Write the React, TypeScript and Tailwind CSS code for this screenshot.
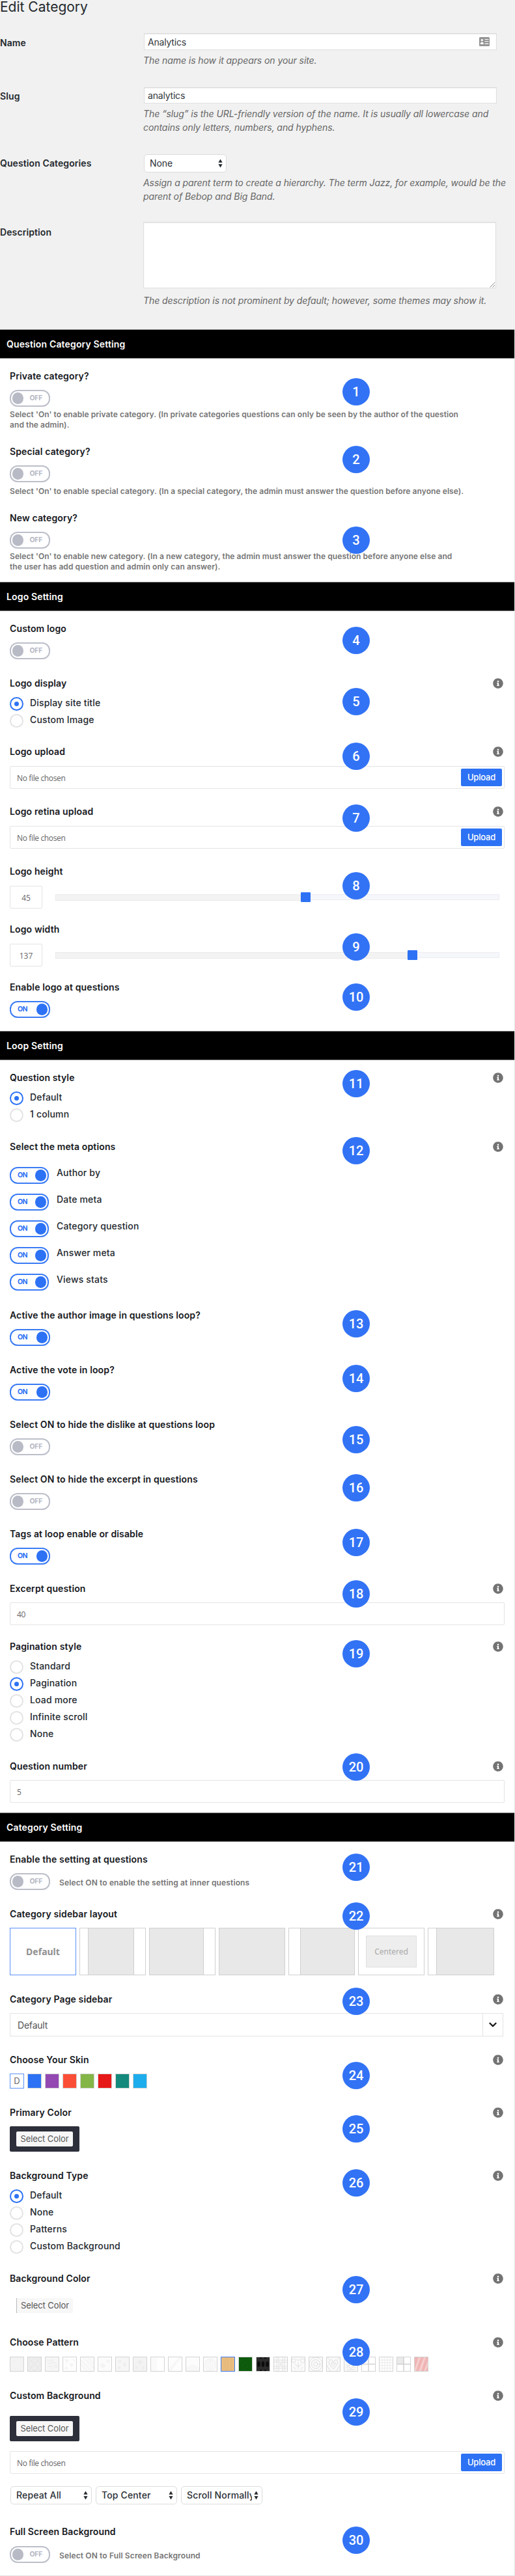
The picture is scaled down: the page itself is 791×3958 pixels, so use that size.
import type { ReactNode } from "react";
import clsx from "clsx";
import { ChevronDown } from "lucide-react";
import { FaInfoCircle } from "react-icons/fa";

function Toggle({ on, narrow }: { on?: boolean; narrow?: boolean }) {
  return (
    <div
      className={clsx(
        "flex h-[26px] shrink-0 items-center justify-between rounded-[12px] border-2 text-[10.5px] leading-none font-bold",
        narrow ? "w-[60px]" : "w-[62px]",
        on
          ? "border-[#3a7bf5] pr-[2px] pl-[10px] text-[#2d72f4]"
          : "border-[#bcbfca] pr-[10px] pl-[2px] text-[#b5b7c3]",
      )}
    >
      {on && <span className="pt-px tracking-[-0.7px]">ON</span>}
      <span
        className={clsx(
          "h-[18px] w-[17px] rounded-full",
          on ? "bg-[#2d72f4]" : "bg-[#b8bac5]",
        )}
      />
      {!on && <span className="pt-px tracking-[-0.3px]">OFF</span>}
    </div>
  );
}

function Radios({ items, active }: { items: string[]; active: string }) {
  return (
    <div className="mt-[11px]">
      {items.map((item) => (
        <div key={item} className="flex h-[26px] items-start">
          <span
            className={clsx(
              "flex h-[21px] w-[21px] items-center justify-center rounded-full border-2",
              item === active ? "border-[#2d72f4]" : "border-[#e3e3e3]",
            )}
          >
            {item === active && (
              <span className="h-[7px] w-[7px] rounded-full bg-[#2d72f4]" />
            )}
          </span>
          <span className="ml-[10px] text-[14px] leading-[18px] font-medium tracking-[0.17px] text-[#23282d]">
            {item}
          </span>
        </div>
      ))}
    </div>
  );
}

function Field({
  label,
  n,
  badge,
  info,
  className,
  children,
}: {
  label: string;
  n: number;
  badge: string;
  info?: boolean;
  className: string;
  children: ReactNode;
}) {
  return (
    <div className={clsx("relative px-[15px] pt-[17px]", className)}>
      <div className="flex h-5 items-center justify-between pr-[2px]">
        <h3 className="text-[14px] leading-5 font-semibold tracking-[0.13px] text-[#16181d]">
          {label}
        </h3>
        {info && <FaInfoCircle className="h-4 w-4 text-[#737373]" />}
      </div>
      {children}
      <span
        className={clsx(
          "absolute left-[526px] z-10 flex h-[42px] w-[42px] items-center justify-center rounded-full bg-[#3273f5] font-['Roboto',sans-serif] text-[20px] font-medium text-white",
          badge,
        )}
      >
        {n}
      </span>
    </div>
  );
}

function SectionTitle({ children }: { children: ReactNode }) {
  return (
    <h2 className="flex h-[45px] items-center border-y border-[#777] bg-black px-[10px] text-[14px] font-semibold tracking-[0.15px] text-white">
      {children}
    </h2>
  );
}

function Note({ children, className }: { children: ReactNode; className?: string }) {
  return (
    <p
      className={clsx(
        "text-[12px] leading-4 font-semibold whitespace-nowrap text-[#757575]",
        className,
      )}
    >
      {children}
    </p>
  );
}

function Upload({ className }: { className: string }) {
  return (
    <div
      className={clsx(
        "flex h-[35px] w-[760px] items-center justify-between rounded-[2px] border border-[#e4e4e4] pr-[3px] pl-[10px]",
        className,
      )}
    >
      <span className="pt-[2px] font-['Open_Sans',sans-serif] text-[12px] tracking-[-0.36px] text-[#666]">
        No file chosen
      </span>
      <span className="flex h-[27px] w-[63px] items-center justify-center rounded-[2px] bg-[#2d72f4] text-[13px] font-medium tracking-[-0.2px] text-white">
        Upload
      </span>
    </div>
  );
}

function NumberBox({ value }: { value: string }) {
  return (
    <div className="mt-[11px] flex h-[35px] w-[760px] items-center rounded-[2px] border border-[#e4e4e4] pt-[2px] pl-[10px] font-['Open_Sans',sans-serif] text-[12px] tracking-[-0.3px] text-[#666]">
      {value}
    </div>
  );
}

function Slider({ value, percent }: { value: string; percent: number }) {
  return (
    <div className="mt-[12px] flex items-center">
      <div className="flex h-[35px] w-[50px] items-center justify-center rounded-[2px] border border-[#e4e4e4] pt-[2px] font-['Open_Sans',sans-serif] text-[12px] text-[#666]">
        {value}
      </div>
      <div className="relative ml-5 h-[9px] w-[682px] border border-[#ececf2] bg-[#f6f7fb]">
        <div
          className="absolute -top-px -left-px h-[10px] border border-[#e9e9e9] bg-[#f3f3f3]"
          style={{ width: `${percent}%` }}
        />
        <div
          className="absolute -top-[4px] -ml-px h-[15px] w-[15px] rounded-[1px] bg-[#2d72f4]"
          style={{ left: `${percent}%` }}
        />
      </div>
    </div>
  );
}

function Select({ label, className }: { label: string; className: string }) {
  return (
    <div
      className={clsx(
        "flex h-[28px] items-center justify-between rounded-[5px] border border-[#dcdcdc] bg-white pr-[5px] pl-2 text-[14px] text-[#2b3036]",
        className,
      )}
    >
      <span className="w-[100px] overflow-hidden leading-5 whitespace-nowrap">{label}</span>
      <svg viewBox="0 0 7 14" className="h-[14px] w-[7px] shrink-0" fill="#23282d">
        <path d="M3.5 0.5 6.6 5.8H0.4zM3.5 13.5 6.6 8.2H0.4z" />
      </svg>
    </div>
  );
}

function FormRow({
  label,
  labelClass,
  className,
  children,
}: {
  label: string;
  labelClass: string;
  className?: string;
  children: ReactNode;
}) {
  return (
    <div className={clsx("flex", className)}>
      <div
        className={clsx(
          "w-[220px] shrink-0 text-[14px] leading-5 font-semibold tracking-[0.1px] text-[#23282d]",
          labelClass,
        )}
      >
        {label}
      </div>
      <div>{children}</div>
    </div>
  );
}

function Help({ className, children }: { className?: string; children: ReactNode }) {
  return (
    <p
      className={clsx(
        "text-[14px] leading-[21px] tracking-[-0.07px] whitespace-nowrap text-[#666] italic",
        className,
      )}
    >
      {children}
    </p>
  );
}

function ColorButton({ className, light }: { className: string; light?: boolean }) {
  return (
    <div
      className={clsx(
        "flex h-[39px] w-[107px] items-center justify-center rounded-[2px]",
        !light && "bg-[#2d303a]",
        className,
      )}
    >
      <span
        className={clsx(
          "flex h-[23px] w-[87px] items-center justify-center rounded-[2px] bg-[#f7f7f7] text-[13px] tracking-[-0.1px] text-[#555]",
          light && "rounded-l-none border-l border-[#bbb]",
        )}
      >
        Select Color
      </span>
    </div>
  );
}

const skins = [
  "bg-[#2d72f4]",
  "bg-[#9349b1]",
  "bg-[#fa4f36]",
  "bg-[#84b547]",
  "bg-[#e71818]",
  "bg-[#15897b]",
  "bg-[#1dacec]",
];

// 20x20 previews of the background textures
const patterns: { fill: string; art?: ReactNode }[] = [
  { fill: "#f3f3f3", art: <path d="M3 5h5M12 12h5M5 16h4" stroke="#efefef" /> },
  {
    fill: "#eeeeee",
    art: (
      <g fill="#fafafa" stroke="#e4e4e4" strokeWidth="0.8">
        <path d="M0 10 10 0 20 10 10 20zM0 0l20 20M20 0 0 20" fill="none" />
        <circle cx="5" cy="10" r="1.5" />
        <circle cx="15" cy="10" r="1.5" />
        <circle cx="10" cy="4" r="1.5" />
        <circle cx="10" cy="16" r="1.5" />
      </g>
    ),
  },
  { fill: "#f6f6f6", art: <path d="M2 4h6v5H3M11 2v6h6M4 13h5v5M12 12h5v3h-4" fill="none" stroke="#eaeaea" /> },
  { fill: "#fdfdfd", art: <path d="M2 2l6 2-2 5zM10 8l6 2-3 5zM4 13l4 4H2zM13 1l5 3v3z" fill="#f3f3f3" /> },
  { fill: "#fafafa", art: <path d="M0 4 16 20M0 10l10 10M4 0l16 16M10 0l10 10" stroke="#f1f1f1" /> },
  { fill: "#fbfbfb", art: <path d="M2 12l5-4 5 5-5 3zM11 5l6-2v6z" fill="#f3f3f3" /> },
  { fill: "#f6f6f6", art: <path d="M4 4h4v4H4zM11 8h5v5h-5zM3 13h4v4H3z" fill="#eeeeee" /> },
  { fill: "#f3f3f3", art: <path d="M10 3l4 4-4 4-4-4zM3 11l4 4-4 3zM13 12l5 3-4 4z" fill="#ececec" /> },
  { fill: "#fefefe", art: <path d="M0 0h9v20H0z" fill="#fafafa" /> },
  { fill: "#fdfdfd", art: <path d="M0 16 16 0h4L4 20H0z" fill="#f7f7f7" /> },
  { fill: "#fcfcfc", art: <path d="M0 20v-4q10-10 20 0v4z" fill="#f7f7f7" /> },
  {
    fill: "#fbfbfb",
    art: (
      <g fill="none" stroke="#efefef">
        <ellipse cx="10" cy="11" rx="4" ry="7" />
        <ellipse cx="10" cy="11" rx="8" ry="9" />
        <path d="M10 4v14" />
      </g>
    ),
  },
  { fill: "#e9bd80", art: <path d="M6 0v20M9 0q2 10 0 20M15 0v20" fill="none" stroke="#e3b475" strokeWidth="0.7" /> },
  { fill: "#0d5a0d", art: <path d="M3 4h2M9 7h2M14 3h2M5 12h2M12 14h2M16 10h2M7 17h2" stroke="#11620f" strokeWidth="2" /> },
  {
    fill: "#2b2b2b",
    art: (
      <g fill="#0c0c0c">
        <ellipse cx="3.5" cy="10" rx="2.2" ry="4" />
        <ellipse cx="10" cy="10" rx="2.2" ry="4" />
        <ellipse cx="16.5" cy="10" rx="2.2" ry="4" />
        <path d="M5 0h3v2H5zM12 0h3v2h-3zM5 18h3v2H5zM12 18h3v2h-3z" />
      </g>
    ),
  },
  {
    fill: "#fbfbfb",
    art: (
      <path
        d="M0 4h20M0 7h20M0 13h20M0 16h20M4 0v20M7 0v20M13 0v20M16 0v20M8 10h4M10 8v4"
        stroke="#e0e0e0"
        fill="none"
        strokeWidth="0.9"
      />
    ),
  },
  {
    fill: "#fafafa",
    art: (
      <g fill="none" stroke="#dcdcdc" strokeWidth="0.8">
        <circle cx="3" cy="5" r="3" />
        <circle cx="17" cy="5" r="3" />
        <path d="M7 2l3 3 3-3M5 10q5 6 10 0M3 14l3 4M17 14l-3 4M10 8v9" />
      </g>
    ),
  },
  {
    fill: "#fafafa",
    art: (
      <g fill="none" stroke="#bdbdbd" strokeWidth="0.8" strokeDasharray="1.6 1.2">
        <circle cx="10" cy="10" r="3" />
        <circle cx="10" cy="10" r="6.5" />
        <circle cx="10" cy="10" r="10" />
      </g>
    ),
  },
  {
    fill: "#f9f9f9",
    art: (
      <g fill="none" stroke="#d6d6d6" strokeWidth="0.8">
        <path d="M10 17Q1 9 4 5t6 2q3-5 6-2t-6 12z" />
        <path d="M10 13q-4-4-3-5t3 1q2-2 3-1t-3 5zM0 12l5 8M20 12l-5 8M1 1l3 2M19 1l-3 2" />
      </g>
    ),
  },
  {
    fill: "#f9f9f9",
    art: (
      <g fill="none" stroke="#d8d8d8" strokeWidth="0.8">
        <circle cx="10" cy="13" r="3" />
        <path d="M2 10l4 3-4 3M18 10l-4 3 4 3M4 18h12M7 8l3 2 3-2" />
      </g>
    ),
  },
  { fill: "#ffffff", art: <path d="M0 10h20M10 0v20" stroke="#d2d2d2" strokeWidth="1.4" /> },
  {
    fill: "#ffffff",
    art: <path d="M0 4h20M0 8h20M0 12h20M0 16h20M4 0v20M8 0v20M12 0v20M16 0v20" stroke="#e6e6e6" strokeWidth="0.8" />,
  },
  {
    fill: "#ffffff",
    art: (
      <g>
        <path d="M0 0h10v10H0z" fill="#eaeaea" />
        <path d="M0 10h20M10 0v20" stroke="#cecece" strokeWidth="1.4" />
      </g>
    ),
  },
  { fill: "#f0b4b4", art: <path d="M0 17 6 0h3L2 20H0zM6 20 14 0h3L10 20zM14 20l6-15v8l-3 7z" fill="#f5cfcf" /> },
];

function Tile({ children, active }: { children?: ReactNode; active?: boolean }) {
  return (
    <div
      className={clsx(
        "flex h-[73px] w-[102px] border",
        active ? "border-[#5a91f7]" : "border-[#d0d0d0]",
      )}
    >
      {children}
    </div>
  );
}

export default function App() {
  return (
    <div className="h-[3958px] w-[791px] overflow-hidden bg-[#f1f1f1] font-['Inter',sans-serif]">
      <div className="h-[506px]">
        <h1 className="h-[51px] text-[21px] leading-[22px] text-[#23282d]">Edit Category</h1>

        <FormRow label="Name" labelClass="pt-[5px]" className="h-[83px]">
          <div className="ml-px flex h-[26px] w-[542px] items-center justify-between border border-[#dfdfdf] border-t-[#d8d8d8] bg-white pr-[10px] pl-[5px] text-[14px] tracking-[-0.2px] text-[#32373c] shadow-[inset_0_1px_2px_rgba(0,0,0,0.07)]">
            Analytics
            <svg viewBox="0 0 16 14" className="h-[14px] w-4">
              <rect width="16" height="14" rx="1.5" fill="#949494" />
              <circle cx="4.3" cy="4.6" r="1.7" fill="#fff" />
              <path d="M1.8 11q0-3.6 2.5-3.6T6.8 11z" fill="#fff" />
              <path d="M8.5 3.5h6M8.5 6.5h6M8.5 10.2h6" stroke="#fff" strokeWidth="1.2" />
            </svg>
          </div>
          <Help className="mt-[5px]">The name is how it appears on your site.</Help>
        </FormRow>

        <FormRow label="Slug" labelClass="pt-[4px]" className="h-[103px]">
          <div className="ml-px flex h-[25px] w-[542px] items-center border border-[#dfdfdf] border-t-[#d8d8d8] bg-white pl-[5px] text-[14px] tracking-[-0.2px] text-[#32373c] shadow-[inset_0_1px_2px_rgba(0,0,0,0.07)]">
            analytics
          </div>
          <Help className="mt-[5px]">
            The “slug” is the URL-friendly version of the name. It is usually all lowercase and
            <br />
            contains only letters, numbers, and hyphens.
          </Help>
        </FormRow>

        <FormRow label="Question Categories" labelClass="pt-[4px]" className="h-[104px]">
          <Select label="None" className="ml-px w-[127px] tracking-[-0.1px]" />
          <Help className="mt-[5px]">
            Assign a parent term to create a hierarchy. The term Jazz, for example, would be the
            <br />
            parent of Bebop and Big Band.
          </Help>
        </FormRow>

        <FormRow label="Description" labelClass="pt-[6px]">
          <div className="flex h-[102px] w-[542px] items-end justify-end border border-[#dfdfdf] border-t-[#d8d8d8] bg-white shadow-[inset_0_1px_2px_rgba(0,0,0,0.07)]">
            <svg viewBox="0 0 9 9" className="h-[9px] w-[9px]" stroke="#777" strokeWidth="0.9">
              <path d="M0.5 8.5 8 1M4.5 8.5 8 5" />
            </svg>
          </div>
          <Help className="mt-[8px]">
            The description is not prominent by default; however, some themes may show it.
          </Help>
        </FormRow>
      </div>

      <div className="h-[3452px] border-r border-b border-[#e5e5e5] bg-white">
        <SectionTitle>Question Category Setting</SectionTitle>
        <Field label="Private category?" n={1} badge="top-[30px]" className="h-[116px]">
          <div className="mt-[11px]">
            <Toggle />
          </div>
          <Note className="mt-[4px] tracking-[0.075px]">
            Select 'On' to enable private category. (In private categories questions can only be seen by the author of the question
            <br />
            and the admin).
          </Note>
        </Field>
        <Field label="Special category?" n={2} badge="top-[18px]" className="h-[102px]">
          <div className="mt-[11px]">
            <Toggle />
          </div>
          <Note className="mt-[6px] tracking-[0.075px]">
            Select 'On' to enable special category. (In a special category, the admin must answer the question before anyone else).
          </Note>
        </Field>
        <Field label="New category?" n={3} badge="top-[40px]" className="h-[125px]">
          <div className="mt-[11px]">
            <Toggle />
          </div>
          <Note className="mt-[4px] tracking-[0.075px]">
            Select 'On' to enable new category. (In a new category, the admin must answer the question before anyone else and
            <br />
            the user has add question and admin only can answer).
          </Note>
        </Field>

        <SectionTitle>Logo Setting</SectionTitle>
        <Field label="Custom logo" n={4} badge="top-[24px]" className="h-[84px]">
          <div className="mt-[11px]">
            <Toggle />
          </div>
        </Field>
        <Field label="Logo display" n={5} badge="top-[34px]" info className="h-[105px]">
          <Radios items={["Display site title", "Custom Image"]} active="Display site title" />
        </Field>
        <Field label="Logo upload" n={6} badge="top-[13px]" info className="h-[92px]">
          <Upload className="mt-[12px]" />
        </Field>
        <Field label="Logo retina upload" n={7} badge="top-[16px]" info className="h-[92px]">
          <Upload className="mt-[12px]" />
        </Field>
        <Field label="Logo height" n={8} badge="top-[28px]" className="h-[89px]">
          <Slider value="45" percent={55.4} />
        </Field>
        <Field label="Logo width" n={9} badge="top-[33px]" className="h-[89px]">
          <Slider value="137" percent={79.6} />
        </Field>
        <Field label="Enable logo at questions" n={10} badge="top-[21px]" className="h-[94px]">
          <div className="mt-[11px]">
            <Toggle on />
          </div>
        </Field>

        <SectionTitle>Loop Setting</SectionTitle>
        <Field label="Question style" n={11} badge="top-[15px]" info className="h-[106px]">
          <Radios items={["Default", "1 column"]} active="Default" />
        </Field>
        <Field label="Select the meta options" n={12} badge="top-[12px]" info className="h-[259px]">
          <div className="mt-[21px]">
            {["Author by", "Date meta", "Category question", "Answer meta", "Views stats"].map(
              (meta) => (
                <div key={meta} className="flex h-[41px] items-start gap-3">
                  <Toggle on narrow />
                  <span className="text-[14px] leading-[18px] font-medium tracking-[0.17px] text-[#23282d]">
                    {meta}
                  </span>
                </div>
              ),
            )}
          </div>
        </Field>
        <Field label="Active the author image in questions loop?" n={13} badge="top-[19px]" className="h-[84px]">
          <div className="mt-[11px]">
            <Toggle on />
          </div>
        </Field>
        <Field label="Active the vote in loop?" n={14} badge="top-[19px]" className="h-[84px]">
          <div className="mt-[11px]">
            <Toggle on />
          </div>
        </Field>
        <Field label="Select ON to hide the dislike at questions loop" n={15} badge="top-[29px]" className="h-[84px]">
          <div className="mt-[11px]">
            <Toggle />
          </div>
        </Field>
        <Field label="Select ON to hide the excerpt in questions" n={16} badge="top-[19px]" className="h-[84px]">
          <div className="mt-[11px]">
            <Toggle />
          </div>
        </Field>
        <Field label="Tags at loop enable or disable" n={17} badge="top-[19px]" className="h-[84px]">
          <div className="mt-[11px]">
            <Toggle on />
          </div>
        </Field>
        <Field label="Excerpt question" n={18} badge="top-[14px]" info className="h-[89px]">
          <NumberBox value="40" />
        </Field>
        <Field label="Pagination style" n={19} badge="top-[17px]" info className="h-[184px]">
          <Radios
            items={["Standard", "Pagination", "Load more", "Infinite scroll", "None"]}
            active="Pagination"
          />
        </Field>
        <Field label="Question number" n={20} badge="top-[7px]" info className="h-[98px]">
          <NumberBox value="5" />
        </Field>

        <SectionTitle>Category Setting</SectionTitle>
        <Field label="Enable the setting at questions" n={21} badge="top-[18px]" className="h-[84px]">
          <div className="mt-[11px] flex items-center gap-[14px]">
            <Toggle />
            <Note className="pt-[3px] tracking-[0.13px]">
              Select ON to enable the setting at inner questions
            </Note>
          </div>
        </Field>
        <Field label="Category sidebar layout" n={22} badge="top-[9px]" info className="h-[131px]">
          <div className="mt-[11px] flex gap-[5px]">
            <Tile active>
              <span className="m-auto font-['Noto_Sans',sans-serif] text-[14px] font-bold text-[#909090]">
                Default
              </span>
            </Tile>
            <Tile>
              <div className="ml-[12px] w-[71px] border-x border-[#cfcfcf] bg-[#e8e8e8]" />
            </Tile>
            <Tile>
              <div className="w-[83px] border-r border-[#cfcfcf] bg-[#e8e8e8]" />
            </Tile>
            <Tile>
              <div className="w-full bg-[#e8e8e8]" />
            </Tile>
            <Tile>
              <div className="ml-[17px] flex-1 border-l border-[#cfcfcf] bg-[#e8e8e8]" />
            </Tile>
            <Tile>
              <span className="m-auto flex h-[49px] w-[78px] items-center justify-center border border-[#e0e0e0] bg-[#eee] font-['Noto_Sans',sans-serif] text-[12px] text-[#a8a8a8]">
                Centered
              </span>
            </Tile>
            <Tile>
              <div className="ml-[12px] flex-1 border-l border-[#cfcfcf] bg-[#e8e8e8]" />
            </Tile>
          </div>
        </Field>
        <Field label="Category Page sidebar" n={23} badge="top-[9px]" info className="h-[93px]">
          <div className="mt-[11px] flex h-[36px] w-[758px] items-stretch border border-[#e4e4e4]">
            <span className="flex-1 pl-[11px] text-[14px] leading-[35px] tracking-[-0.2px] text-[#555]">
              Default
            </span>
            <span className="flex w-[31px] items-center justify-center border-l border-[#e4e4e4]">
              <ChevronDown size={18} strokeWidth={3.2} className="text-[#1c1c1c]" />
            </span>
          </div>
        </Field>
        <Field label="Choose Your Skin" n={24} badge="top-[30px]" info className="h-[81px]">
          <div className="mt-[11px] flex gap-[5px]">
            <span className="flex h-[23px] w-[22px] items-center justify-center border border-[#5a91f7] text-[13px] text-[#666]">
              D
            </span>
            {skins.map((skin) => (
              <span key={skin} className={clsx("h-[23px] w-[22px] border border-[#d3d3d3]", skin)} />
            ))}
          </div>
        </Field>
        <Field label="Primary Color" n={25} badge="top-[31px]" info className="h-[97px]">
          <ColorButton className="mt-[11px]" />
        </Field>
        <Field label="Background Type" n={26} badge="top-[17px]" info className="h-[158px]">
          <Radios items={["Default", "None", "Patterns", "Custom Background"]} active="Default" />
        </Field>
        <Field label="Background Color" n={27} badge="top-[23px]" info className="h-[98px]">
          <ColorButton light className="mt-[12px]" />
        </Field>
        <Field label="Choose Pattern" n={28} badge="top-[21px]" info className="h-[82px]">
          <div className="mt-[12px] flex gap-[5px]">
            {patterns.map(({ fill, art }, i) => (
              <svg
                key={i}
                viewBox="0 0 20 20"
                preserveAspectRatio="none"
                className={clsx(
                  "h-[23px] w-[22px] border",
                  i === 12 ? "border-[#3f7df5]" : "border-[#d3d3d3]",
                )}
              >
                <rect width="20" height="20" fill={fill} />
                {art}
              </svg>
            ))}
          </div>
        </Field>
        <Field label="Custom Background" n={29} badge="top-[31px]" info className="h-[209px]">
          <ColorButton className="mt-[21px]" />
          <Upload className="mt-[15px]" />
          <div className="mt-[19px] ml-px flex gap-[6px] font-medium tracking-[0.15px]">
            <Select label="Repeat All" className="w-[125px]" />
            <Select label="Top Center" className="w-[125px]" />
            <Select label="Scroll Normally" className="w-[125px]" />
          </div>
        </Field>
        <Field label="Full Screen Background" n={30} badge="top-[19px]" className="h-[94px]">
          <div className="mt-[12px] flex items-center gap-[14px]">
            <Toggle />
            <Note className="pt-[3px] tracking-[0.13px]">Select ON to Full Screen Background</Note>
          </div>
        </Field>
      </div>
    </div>
  );
}
